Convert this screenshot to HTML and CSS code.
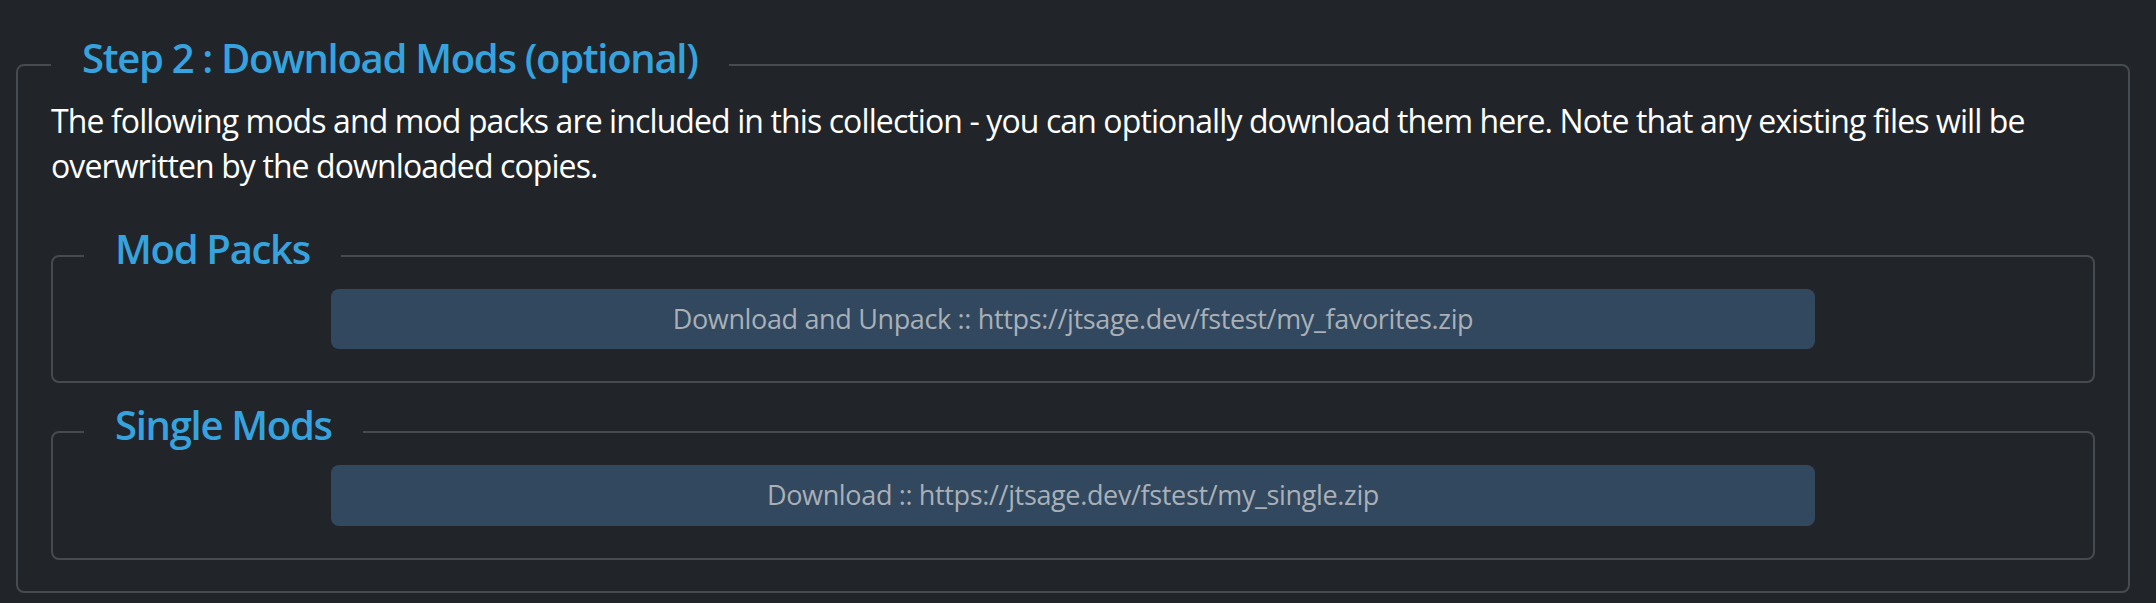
FILE: index.html
```html
<!DOCTYPE html>
<html lang="en">
<head>
<meta charset="utf-8">
<title>Step 2 : Download Mods</title>
<link rel="stylesheet" href="styles.css">
</head>
<body>
<fieldset class="step">
  <legend class="legend">Step 2 : Download Mods (optional)</legend>
  <p class="intro">The following mods and mod packs are included in this collection - you can optionally download them here. Note that any existing files will be overwritten by the downloaded copies.</p>
  <fieldset class="group">
    <legend class="legend">Mod Packs</legend>
    <button class="dl-btn" type="button">Download and Unpack :: https://jtsage.dev/fstest/my_favorites.zip</button>
  </fieldset>
  <fieldset class="group group-last">
    <legend class="legend">Single Mods</legend>
    <button class="dl-btn" type="button">Download :: https://jtsage.dev/fstest/my_single.zip</button>
  </fieldset>
</fieldset>
</body>
</html>
```
FILE: styles.css
```css
html, body {
  margin: 0;
  background: #212529;
}

body {
  padding: 34.5px 26px 0 16px;
  font-family: "Open Sans", "Noto Sans", sans-serif;
  color: #ffffff;
}

.step {
  margin: 0;
  border: 2px solid #464b51;
  border-radius: 8px;
  padding: 0 33px 31px 33px;
  min-width: 0;
}

.legend {
  padding: 0 31px 14px 31px;
  margin: 0;
  font-size: 40px;
  line-height: 46px;
  font-weight: 600;
  color: #36a3df;
  letter-spacing: -1.3px;
}

.intro {
  margin: 3px 0 38px 0;
  font-size: 32px;
  line-height: 45px;
  letter-spacing: -0.9px;
  color: #ffffff;
}

.group {
  margin: 0 0 19px 0;
  border: 2px solid #464b51;
  border-radius: 8px;
  padding: 0 31px 32px 31px;
  min-width: 0;
}

.group-last {
  margin-bottom: 0;
}

.dl-btn {
  display: block;
  width: 75%;
  margin: 3px auto 0 auto;
  padding: 10px 12px;
  border: 0;
  border-radius: 8px;
  background: #32485f;
  color: #a9b0b7;
  font-family: "Open Sans", "Noto Sans", sans-serif;
  font-size: 27px;
  line-height: 40.5px;
  letter-spacing: -0.35px;
  text-align: center;
}
```
